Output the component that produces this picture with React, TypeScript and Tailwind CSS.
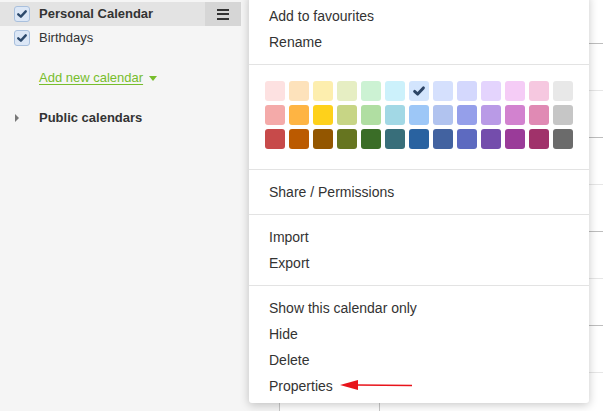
import React from "react";

const palette = [
  ["#fde1e1", "#fde2bb", "#fdeeae", "#e6eec3", "#ccf2d3", "#ccf1fb", "#d3e5fd", "#d5e0fd", "#d4d8fd", "#e4d4fd", "#f5ccf6", "#f6c8e0", "#e8e8e8"],
  ["#f4aaa9", "#feb443", "#fed11b", "#c7d585", "#b0dea2", "#a2d8e5", "#9dc7f7", "#b1c3ef", "#959fea", "#b99ae6", "#d282cf", "#e08ab4", "#c6c6c6"],
  ["#c74a4a", "#bb5a00", "#935600", "#667520", "#3a6d27", "#386e7a", "#2962a0", "#4262a0", "#5d6ac0", "#744dac", "#9a3b99", "#a0326a", "#6b6b6b"],
];

function Check({ className, width = 3 }: { className?: string; width?: number }) {
  return (
    <svg viewBox="0 0 16 16" className={className}>
      <path d="M3 8.5 L6.5 11.5 L13 4.5" fill="none" stroke="currentColor" strokeWidth={width} strokeLinecap="round" strokeLinejoin="round" />
    </svg>
  );
}

function CalCheckbox() {
  return (
    <div className="w-[16px] h-[16px] rounded-[3px] border border-[#a9c0dd] bg-[#dce7f6] flex items-center justify-center text-[#2d4a6c]">
      <Check className="w-[12px] h-[12px]" width={3.2} />
    </div>
  );
}

function MenuItem({ children }: { children: React.ReactNode }) {
  return <div className="h-[26px] leading-[26px] px-5 text-[14px] text-[#333]">{children}</div>;
}

export default function App() {
  const rows = [0, 1, 2, 3, 4, 5, 6, 7];
  return (
    <div className="relative w-[603px] h-[411px] overflow-hidden bg-white flex" style={{ fontFamily: '"Liberation Sans", Arial, sans-serif' }}>
      {/* Sidebar */}
      <div className="w-[280px] shrink-0 bg-[#f5f5f5] border-r border-[#c8c8c8] pt-[2px]">
        <div className="w-[241px] h-[24px] bg-[#e3e3e3] flex items-center">
          <div className="pl-[14px] pr-[9px]">
            <CalCheckbox />
          </div>
          <span className="flex-1 text-[13px] font-bold text-[#333]">Personal Calendar</span>
          <div className="w-[36px] h-full bg-[#d6d6d6] flex flex-col items-center justify-center gap-[2.5px]">
            <div className="w-[12px] h-[2px] bg-[#333]" />
            <div className="w-[12px] h-[2px] bg-[#333]" />
            <div className="w-[12px] h-[2px] bg-[#333]" />
          </div>
        </div>
        <div className="h-[23px] flex items-center">
          <div className="pl-[14px] pr-[9px]">
            <CalCheckbox />
          </div>
          <span className="text-[13px] text-[#333]">Birthdays</span>
        </div>
        <div className="mt-[19px] pl-[39px] flex items-center gap-[6px] h-[20px]">
          <span className="text-[13px] text-[#77bd2c] underline underline-offset-2">Add new calendar</span>
          <span className="w-0 h-0 border-l-[4px] border-r-[4px] border-t-[5px] border-l-transparent border-r-transparent border-t-[#77bd2c]" />
        </div>
        <div className="mt-[20px] flex items-center h-[20px]">
          <span className="ml-[15px] mr-[20px] w-0 h-0 border-t-[4px] border-b-[4px] border-l-[4px] border-t-transparent border-b-transparent border-l-[#777]" />
          <span className="text-[13px] font-bold text-[#333]">Public calendars</span>
        </div>
      </div>

      {/* Calendar grid */}
      <div className="flex-1 flex">
        {[0, 1].map((c) => (
          <div key={c} className={c === 0 ? "w-[100px] border-r border-[#c8c8c8]" : "flex-1"}>
            <div className="h-[44px] border-b border-[#bdbdbd]" />
            {rows.map((r) => (
              <div key={r} className={r % 2 === 0 ? "h-[47px] border-b border-[#e6e6e6]" : "h-[47px] border-b border-[#bdbdbd]"} />
            ))}
          </div>
        ))}
      </div>

      {/* Context menu */}
      <div className="absolute left-[249px] top-[-6px] w-[340px] bg-white rounded-[3px] shadow-[0_2px_10px_rgba(0,0,0,0.22)]">
        <div className="py-[9px]">
          <MenuItem>Add to favourites</MenuItem>
          <MenuItem>Rename</MenuItem>
        </div>
        <div className="border-t border-[#e3e3e3] pt-[16px] pb-[20px] pl-[16px]">
          <div className="grid grid-cols-[repeat(13,20px)] gap-[4px]">
            {palette.map((row, ri) =>
              row.map((color, ci) => (
                <div key={`${ri}-${ci}`} className="w-[20px] h-[20px] rounded-[3px] flex items-center justify-center text-[#2d4566]" style={{ backgroundColor: color }}>
                  {ri === 0 && ci === 6 ? <Check className="w-[14px] h-[14px]" width={3.4} /> : null}
                </div>
              ))
            )}
          </div>
        </div>
        <div className="border-t border-[#e3e3e3] py-[9px]">
          <MenuItem>Share / Permissions</MenuItem>
        </div>
        <div className="border-t border-[#e3e3e3] py-[9px]">
          <MenuItem>Import</MenuItem>
          <MenuItem>Export</MenuItem>
        </div>
        <div className="border-t border-[#e3e3e3] pt-[9px] pb-[4px]">
          <MenuItem>Show this calendar only</MenuItem>
          <MenuItem>Hide</MenuItem>
          <MenuItem>Delete</MenuItem>
          <MenuItem>Properties</MenuItem>
        </div>
      </div>

      {/* Annotation arrow */}
      <svg className="absolute left-[338px] top-[378px]" width="80" height="14" viewBox="0 0 80 14">
        <line x1="18" y1="7" x2="74" y2="7.5" stroke="#e8141b" strokeWidth="1.3" />
        <polygon points="2,7 20,2 20,12" fill="#e8141b" />
      </svg>
    </div>
  );
}
